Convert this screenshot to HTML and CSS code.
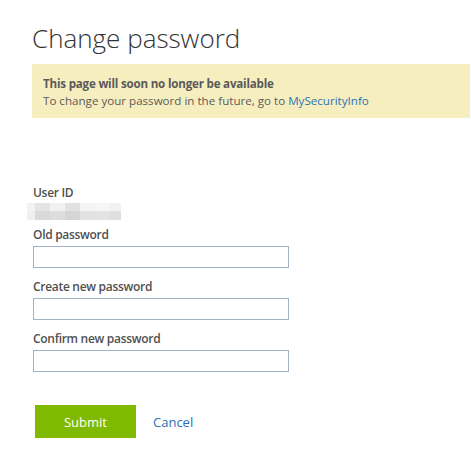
FILE: index.html
```html
<!DOCTYPE html>
<html>
<head>
<meta charset="utf-8">
<link rel="stylesheet" href="styles.css">
</head>
<body>
<div class="page">
  <h1 class="title">Change password</h1>
  <div class="notice">
    <div class="notice-head">This page will soon no longer be available</div>
    <div class="notice-body">To change your password in the future, go to <a class="link" href="#">MySecurityInfo</a></div>
  </div>
  <form class="form">
    <div class="field field-id">
      <div class="label">User ID</div>
      <div class="blur">
        <span class="px c1"></span><span class="px c2 w"></span><span class="px c3 w"></span><span class="px c4 w"></span><span class="px c5 w"></span><span class="px c6 w"></span><span class="px c7 n"></span>
        <span class="px d1"></span><span class="px d2 w"></span><span class="px d3 w"></span><span class="px d4 w"></span><span class="px d5 w"></span><span class="px d6 w"></span><span class="px d7 n"></span>
      </div>
    </div>
    <div class="field">
      <label class="label">Old password</label>
      <input class="input" type="password">
    </div>
    <div class="field">
      <label class="label">Create new password</label>
      <input class="input" type="password">
    </div>
    <div class="field">
      <label class="label">Confirm new password</label>
      <input class="input" type="password">
    </div>
    <div class="actions">
      <button class="submit" type="button">Submit</button>
      <a class="cancel" href="#">Cancel</a>
    </div>
  </form>
</div>
</body>
</html>
```
FILE: styles.css
```css
html, body {
  margin: 0;
  padding: 0;
  background: #ffffff;
}
body {
  font-family: "Open Sans", "Noto Sans", sans-serif;
  color: #505050;
}
.page {
  padding: 19px 1px 0 32px;
}
.title {
  margin: 0;
  font-weight: 300;
  font-size: 26px;
  line-height: 38px;
  color: #333333;
  letter-spacing: 0;
}
.notice {
  margin-top: 7px;
  background: #f7eebf;
  padding: 11px 10px 9px 11px;
  font-size: 11.6px;
  line-height: 17px;
  color: #5a5a5a;
}
.notice-head {
  font-weight: 700;
  letter-spacing: -0.2px;
}
.notice-body {
  letter-spacing: 0;
}
.link {
  color: #2a73b8;
  text-decoration: none;
}
.form {
  margin-top: 66px;
  padding-left: 1px;
}
.field {
  display: flex;
  flex-direction: column;
  align-items: flex-start;
  margin-bottom: 10px;
}
.field-id {
  margin-bottom: 6px;
}
.label {
  font-size: 12px;
  font-weight: 600;
  line-height: 17px;
  color: #505050;
  margin-bottom: 3px;
  letter-spacing: -0.3px;
}
.blur {
  display: grid;
  grid-template-columns: 8px repeat(5, 15px) 11px;
  grid-template-rows: 8px 9px;
  margin-left: -6px;
  margin-top: -1px;
}
.c1 { background: #f3f3f3; }
.c2 { background: #e4e4e4; }
.c3 { background: #f1f1f1; }
.c4 { background: #e1e1e1; }
.c5 { background: #f5f5f5; }
.c6 { background: #f6f6f6; }
.c7 { background: #f1f1f1; }
.d1 { background: #f0f0f0; }
.d2 { background: #d9d9d9; }
.d3 { background: #dddddd; }
.d4 { background: #d5d5d5; }
.d5 { background: #e1e1e1; }
.d6 { background: #e3e3e3; }
.d7 { background: #dfdfdf; }
.input {
  box-sizing: border-box;
  width: 256px;
  height: 22px;
  margin: 0;
  border: 1px solid #9fb2c6;
  border-radius: 0;
  background: #fff;
  padding: 0 4px;
}
.actions {
  margin-top: 33px;
  display: flex;
  align-items: center;
  gap: 17px;
  padding-left: 2px;
}
.submit {
  width: 101px;
  height: 33px;
  border: none;
  background: #7fba00;
  color: #ffffff;
  font-family: "Open Sans", "Noto Sans", sans-serif;
  font-size: 13px;
  padding: 0;
}
.cancel {
  color: #2a6fb5;
  text-decoration: none;
  font-size: 13px;
}
```
